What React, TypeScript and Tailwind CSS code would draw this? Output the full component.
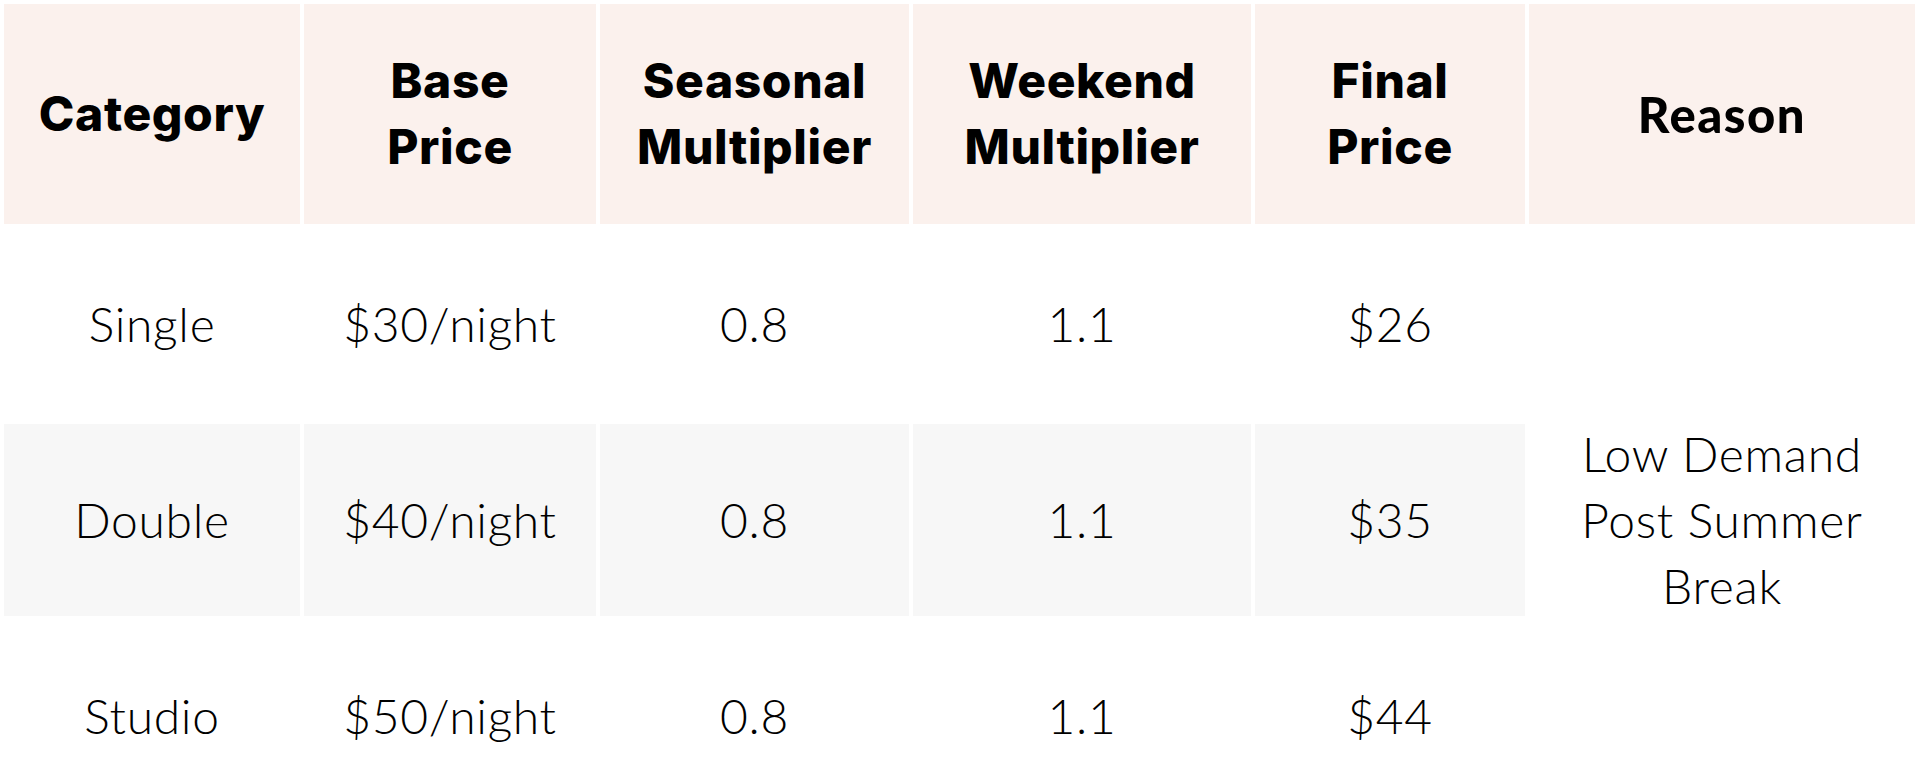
import React from 'react';

const rows = [
  { category: 'Single', base: '$30/night', seasonal: '0.8', weekend: '1.1', final: '$26' },
  { category: 'Double', base: '$40/night', seasonal: '0.8', weekend: '1.1', final: '$35' },
  { category: 'Studio', base: '$50/night', seasonal: '0.8', weekend: '1.1', final: '$44' },
];

const headCell = "bg-[#fbf1ed] text-black text-center align-middle font-['Inter',sans-serif] font-extrabold text-[48px] leading-[66px] tracking-[0.6px]";
const bodyCell = "text-center align-middle font-['Lato',sans-serif] font-light text-[48px] leading-[66px] tracking-[0.7px] text-black";

export default function App() {
  return (
    <div className="w-[1919px] h-[777px] overflow-hidden bg-white">
      <table className="w-full border-separate border-spacing-1 table-fixed">
        <colgroup>
          <col className="w-[296px]" />
          <col className="w-[292px]" />
          <col className="w-[309px]" />
          <col className="w-[338px]" />
          <col className="w-[270px]" />
          <col />
        </colgroup>
        <thead>
          <tr className="h-[220px]">
            <th className={headCell}>Category</th>
            <th className={headCell}>Base<br />Price</th>
            <th className={headCell}>Seasonal<br />Multiplier</th>
            <th className={headCell}>Weekend<br />Multiplier</th>
            <th className={headCell}>Final<br />Price</th>
            <th className="bg-[#fbf1ed] text-black text-center align-middle font-['Lato',sans-serif] font-black text-[49px] leading-[66px] tracking-[1.5px]">Reason</th>
          </tr>
        </thead>
        <tbody>
          {rows.map((r, i) => {
            const bg = i === 1 ? 'bg-[#f7f7f7]' : 'bg-white';
            return (
              <tr key={r.category} className="h-[192px]">
                <td className={`${bodyCell} ${bg}`}>{r.category}</td>
                <td className={`${bodyCell} ${bg}`}>{r.base}</td>
                <td className={`${bodyCell} ${bg}`}>{r.seasonal}</td>
                <td className={`${bodyCell} ${bg}`}>{r.weekend}</td>
                <td className={`${bodyCell} ${bg}`}>{r.final}</td>
                {i === 0 && (
                  <td rowSpan={3} className={`${bodyCell} bg-white`}>
                    Low Demand<br />Post Summer<br />Break
                  </td>
                )}
              </tr>
            );
          })}
        </tbody>
      </table>
    </div>
  );
}
